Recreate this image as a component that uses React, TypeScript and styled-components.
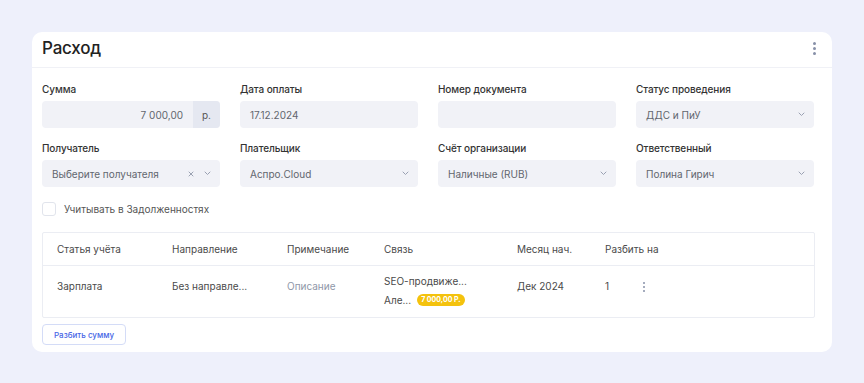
import React from 'react';
import { styled, createGlobalStyle } from 'styled-components';

const GlobalStyle = createGlobalStyle`
  html, body {
    margin: 0;
    padding: 0;
    background: #eef0fb;
    font-family: Inter, 'Noto Sans', sans-serif;
  }
`;

const Page = styled.div`
  padding: 32px;
  width: 800px;
`;

const Card = styled.div`
  background: #fff;
  border-radius: 10px;
  padding-bottom: 7px;
`;

const Header = styled.div`
  height: 36px;
  display: flex;
  align-items: center;
  justify-content: space-between;
  padding: 0 12px 3px 10px;
  box-sizing: border-box;
  border-bottom: 1px solid #f0f1f6;
`;

const Title = styled.h1`
  margin: 0;
  font-size: 17px;
  font-weight: 500;
  color: #222;
  letter-spacing: -0.2px;
`;

const Kebab = styled.div<{ $size?: number }>`
  display: flex;
  flex-direction: column;
  gap: 2px;
  padding: 2px 4px;

  span {
    width: ${(p) => p.$size ?? 3}px;
    height: ${(p) => p.$size ?? 3}px;
    border-radius: 50%;
    background: #8790a8;
  }
`;

const Body = styled.div`
  padding: 14px 17px 0 10px;
`;

const FormGrid = styled.div`
  display: grid;
  grid-template-columns: repeat(4, 178px);
  column-gap: 20px;
  row-gap: 13px;
`;

const Field = styled.div`
  display: flex;
  flex-direction: column;
  gap: 5px;
`;

const Label = styled.label`
  font-size: 10px;
  line-height: 14px;
  font-weight: 500;
  color: #333;
  letter-spacing: -0.1px;
`;

const InputBox = styled.div`
  height: 27px;
  border-radius: 4px;
  background: #f1f2f7;
  display: flex;
  align-items: center;
  overflow: hidden;
  font-size: 10px;
  color: #62666e;
`;

const InputText = styled.div<{ $align?: 'left' | 'right' }>`
  flex: 1;
  padding: 0 10px;
  text-align: ${(p) => p.$align ?? 'left'};
  white-space: nowrap;
`;

const Suffix = styled.div`
  width: 27px;
  height: 100%;
  background: #e5e8f1;
  display: flex;
  align-items: center;
  justify-content: center;
  color: #555;
`;

const Icons = styled.div`
  display: flex;
  align-items: center;
  gap: 10px;
  padding-right: 9px;
`;

const Chevron = () => (
  <svg width="7" height="5" viewBox="0 0 7 5" fill="none">
    <path d="M1 1l2.5 2.5L6 1" stroke="#9aa1b2" strokeWidth="1" strokeLinecap="round" />
  </svg>
);

const Cross = () => (
  <svg width="6" height="6" viewBox="0 0 6 6" fill="none">
    <path d="M1 1l4 4M5 1L1 5" stroke="#9aa1b2" strokeWidth="1" strokeLinecap="round" />
  </svg>
);

const CheckRow = styled.div`
  display: flex;
  align-items: center;
  gap: 8px;
  margin-top: 15px;
  font-size: 10px;
  color: #555;
`;

const CheckBox = styled.span`
  width: 12px;
  height: 12px;
  border: 1px solid #e1e4ec;
  border-radius: 3px;
  background: #fff;
`;

const Table = styled.div`
  margin-top: 16px;
  border: 1px solid #ebedf3;
  border-radius: 2px;
`;

const COLS = '115px 115px 97px 133px 88px 34px 20px 1fr';

const HeadRow = styled.div`
  display: grid;
  grid-template-columns: ${COLS};
  height: 32px;
  align-items: center;
  padding-left: 14px;
  border-bottom: 1px solid #ebedf3;
  font-size: 10px;
  color: #4a4a4a;
  white-space: nowrap;
`;

const DataRow = styled.div`
  display: grid;
  grid-template-columns: ${COLS};
  height: 51px;
  align-items: start;
  padding-left: 14px;
  font-size: 10px;
  color: #4a4a4a;
  white-space: nowrap;
`;

const Cell = styled.div<{ $muted?: boolean }>`
  color: ${(p) => (p.$muted ? '#8f97a8' : '#4a4a4a')};
  display: flex;
  align-items: center;
  padding-top: 14px;
`;

const Link = styled.div`
  display: flex;
  flex-direction: column;
  gap: 7px;
  padding-top: 9px;
`;

const LinkLine = styled.div`
  display: flex;
  align-items: center;
  gap: 6px;
`;

const Badge = styled.span`
  background: #f4c20d;
  color: #fff;
  font-size: 7px;
  font-weight: 700;
  line-height: 12px;
  padding: 0 4px;
  border-radius: 7px;
`;

const SplitButton = styled.button`
  margin-top: 6px;
  height: 21px;
  padding: 0 11px;
  border: 1px solid #d4dcf7;
  border-radius: 4px;
  background: #fff;
  color: #4766e6;
  font-family: inherit;
  font-size: 8px;
  font-weight: 500;
`;

const columns = ['Статья учёта', 'Направление', 'Примечание', 'Связь', 'Месяц нач.', 'Разбить на'];

const App: React.FC = () => {
  return (
    <Page>
      <GlobalStyle />
      <Card>
        <Header>
          <Title>Расход</Title>
          <Kebab>
            <span />
            <span />
            <span />
          </Kebab>
        </Header>
        <Body>
          <FormGrid>
            <Field>
              <Label>Сумма</Label>
              <InputBox>
                <InputText $align="right">7 000,00</InputText>
                <Suffix>р.</Suffix>
              </InputBox>
            </Field>
            <Field>
              <Label>Дата оплаты</Label>
              <InputBox>
                <InputText>17.12.2024</InputText>
              </InputBox>
            </Field>
            <Field>
              <Label>Номер документа</Label>
              <InputBox />
            </Field>
            <Field>
              <Label>Статус проведения</Label>
              <InputBox>
                <InputText>ДДС и ПиУ</InputText>
                <Icons>
                  <Chevron />
                </Icons>
              </InputBox>
            </Field>
            <Field>
              <Label>Получатель</Label>
              <InputBox>
                <InputText>Выберите получателя</InputText>
                <Icons>
                  <Cross />
                  <Chevron />
                </Icons>
              </InputBox>
            </Field>
            <Field>
              <Label>Плательщик</Label>
              <InputBox>
                <InputText>Аспро.Cloud</InputText>
                <Icons>
                  <Chevron />
                </Icons>
              </InputBox>
            </Field>
            <Field>
              <Label>Счёт организации</Label>
              <InputBox>
                <InputText>Наличные (RUB)</InputText>
                <Icons>
                  <Chevron />
                </Icons>
              </InputBox>
            </Field>
            <Field>
              <Label>Ответственный</Label>
              <InputBox>
                <InputText>Полина Гирич</InputText>
                <Icons>
                  <Chevron />
                </Icons>
              </InputBox>
            </Field>
          </FormGrid>

          <CheckRow>
            <CheckBox />
            Учитывать в Задолженностях
          </CheckRow>

          <Table>
            <HeadRow>
              {columns.map((c) => (
                <div key={c}>{c}</div>
              ))}
            </HeadRow>
            <DataRow>
              <Cell>Зарплата</Cell>
              <Cell>Без направле...</Cell>
              <Cell $muted>Описание</Cell>
              <Link>
                <div>SEO-продвиже...</div>
                <LinkLine>
                  Але...
                  <Badge>7 000,00 Р.</Badge>
                </LinkLine>
              </Link>
              <Cell>Дек 2024</Cell>
              <Cell>1</Cell>
              <Cell>
                <Kebab $size={2}>
                  <span />
                  <span />
                  <span />
                </Kebab>
              </Cell>
            </DataRow>
          </Table>

          <SplitButton>Разбить сумму</SplitButton>
        </Body>
      </Card>
    </Page>
  );
};

export default App;
